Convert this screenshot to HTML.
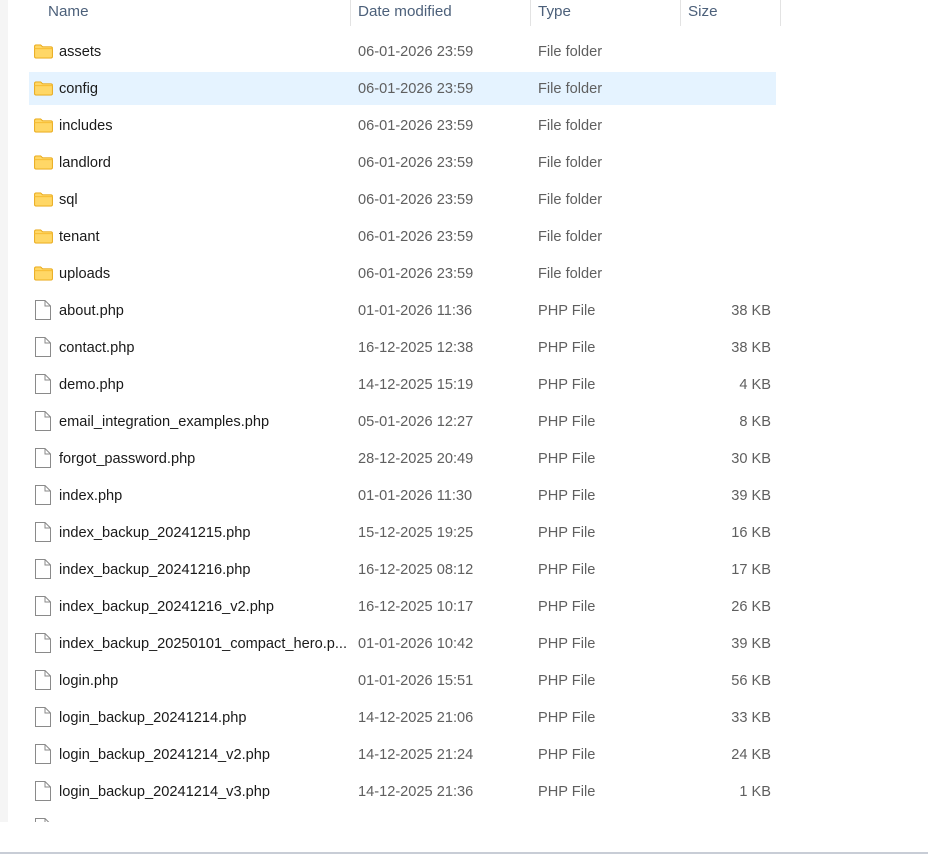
<!DOCTYPE html>
<html><head><meta charset="utf-8"><style>
*{margin:0;padding:0;box-sizing:border-box}
body{width:928px;height:856px;background:#fff;font-family:"Liberation Sans",sans-serif;font-size:14.6px;position:relative;overflow:hidden}
.strip{position:absolute;left:0;top:0;width:8px;height:822px;background:#f5f5f5}
.hdr{position:absolute;top:0;height:26px;color:#4c607a;font-size:15.2px;line-height:24px}
.sep{position:absolute;top:0;width:1px;height:26px;background:#e3e3e3}
.row{position:absolute;left:29px;width:747px;height:33px;line-height:34px}
.row.sel{background:#e5f3ff}
.row span{position:absolute;top:0;white-space:nowrap}
.n{left:30px;color:#1a1a1a}
.d{left:329px;color:#5f5f5f}
.t{left:509px;color:#5f5f5f}
.s{right:5px;color:#5f5f5f}
.ic{position:absolute;left:5px;top:9px}
.bot{position:absolute;left:0;top:822px;width:928px;height:34px;background:#fff}
.line{position:absolute;left:0;top:852px;width:928px;height:2px;background:#c8cdd6}
</style></head><body>
<div class="strip"></div>
<div class="hdr" style="left:48px">Name</div>
<div class="sep" style="left:350px"></div>
<div class="hdr" style="left:358px">Date modified</div>
<div class="sep" style="left:530px"></div>
<div class="hdr" style="left:538px">Type</div>
<div class="sep" style="left:680px"></div>
<div class="hdr" style="left:688px">Size</div>
<div class="sep" style="left:780px"></div>
<div id="rows"></div>
<script>
const F='<svg class="ic" width="19" height="15" viewBox="0 0 20 16"><path d="M0.5 2.5 Q0.5 1 2 1 H7 L9 3 H18 Q19.5 3 19.5 4.5 V13.5 Q19.5 15 18 15 H2 Q0.5 15 0.5 13.5Z" fill="#ffd766" stroke="#e8a50c"/><path d="M0.5 5 H19.5" stroke="#f5b82a"/></svg>';
const P='<svg class="ic" style="left:6px;top:6px" width="16" height="20" viewBox="0 0 16 20"><path d="M0.5 0.5 H10 L15.5 6 V19.5 H0.5Z" fill="#fff" stroke="#8a8a8a"/><path d="M10 0.5 V6 H15.5" fill="none" stroke="#8a8a8a"/></svg>';
const data=[
["assets","06-01-2026 23:59","File folder","",1],["config","06-01-2026 23:59","File folder","",1],["includes","06-01-2026 23:59","File folder","",1],["landlord","06-01-2026 23:59","File folder","",1],["sql","06-01-2026 23:59","File folder","",1],["tenant","06-01-2026 23:59","File folder","",1],["uploads","06-01-2026 23:59","File folder","",1],
["about.php","01-01-2026 11:36","PHP File","38 KB"],["contact.php","16-12-2025 12:38","PHP File","38 KB"],["demo.php","14-12-2025 15:19","PHP File","4 KB"],["email_integration_examples.php","05-01-2026 12:27","PHP File","8 KB"],["forgot_password.php","28-12-2025 20:49","PHP File","30 KB"],["index.php","01-01-2026 11:30","PHP File","39 KB"],["index_backup_20241215.php","15-12-2025 19:25","PHP File","16 KB"],["index_backup_20241216.php","16-12-2025 08:12","PHP File","17 KB"],["index_backup_20241216_v2.php","16-12-2025 10:17","PHP File","26 KB"],["index_backup_20250101_compact_hero.p...","01-01-2026 10:42","PHP File","39 KB"],["login.php","01-01-2026 15:51","PHP File","56 KB"],["login_backup_20241214.php","14-12-2025 21:06","PHP File","33 KB"],["login_backup_20241214_v2.php","14-12-2025 21:24","PHP File","24 KB"],["login_backup_20241214_v3.php","14-12-2025 21:36","PHP File","1 KB"],["","","","",0]];
let h='';data.forEach((r,i)=>{const y=35+i*37;h+=`<div class="row${i==1?' sel':''}" style="top:${y}px">${r[4]?F:P}<span class="n">${r[0]}</span><span class="d">${r[1]}</span><span class="t">${r[2]}</span><span class="s">${r[3]}</span></div>`});
document.getElementById('rows').innerHTML=h;
</script>
<div class="bot"></div>
<div class="line"></div>
</body></html>
